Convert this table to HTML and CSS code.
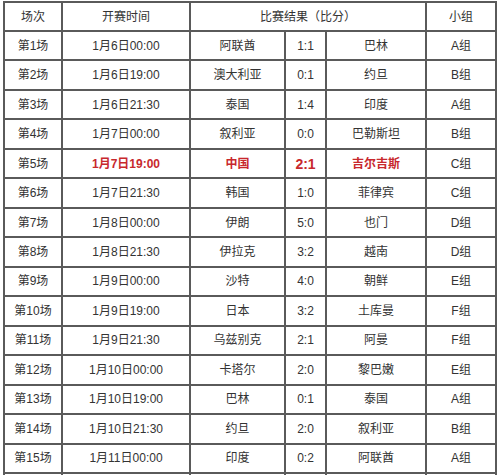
FILE: index.html
```html
<!DOCTYPE html>
<html lang="zh-CN">
<head>
<meta charset="utf-8">
<title>赛程</title>
<link rel="stylesheet" href="styles.css">
</head>
<body>
<table class="schedule">
  <colgroup>
    <col class="c-no">
    <col class="c-time">
    <col class="c-home">
    <col class="c-score">
    <col class="c-away">
    <col class="c-group">
  </colgroup>
  <thead>
    <tr class="head">
      <th>场次</th>
      <th>开赛时间</th>
      <th colspan="3">比赛结果（比分）</th>
      <th>小组</th>
    </tr>
  </thead>
  <tbody>
    <tr><td>第1场</td><td>1月6日00:00</td><td>阿联酋</td><td>1:1</td><td>巴林</td><td>A组</td></tr>
    <tr><td>第2场</td><td>1月6日19:00</td><td>澳大利亚</td><td>0:1</td><td>约旦</td><td>B组</td></tr>
    <tr><td>第3场</td><td>1月6日21:30</td><td>泰国</td><td>1:4</td><td>印度</td><td>A组</td></tr>
    <tr><td>第4场</td><td>1月7日00:00</td><td>叙利亚</td><td>0:0</td><td>巴勒斯坦</td><td>B组</td></tr>
    <tr class="hl"><td>第5场</td><td class="red">1月7日19:00</td><td class="red">中国</td><td class="red big">2:1</td><td class="red">吉尔吉斯</td><td>C组</td></tr>
    <tr><td>第6场</td><td>1月7日21:30</td><td>韩国</td><td>1:0</td><td>菲律宾</td><td>C组</td></tr>
    <tr><td>第7场</td><td>1月8日00:00</td><td>伊朗</td><td>5:0</td><td>也门</td><td>D组</td></tr>
    <tr><td>第8场</td><td>1月8日21:30</td><td>伊拉克</td><td>3:2</td><td>越南</td><td>D组</td></tr>
    <tr><td>第9场</td><td>1月9日00:00</td><td>沙特</td><td>4:0</td><td>朝鲜</td><td>E组</td></tr>
    <tr><td>第10场</td><td>1月9日19:00</td><td>日本</td><td>3:2</td><td>土库曼</td><td>F组</td></tr>
    <tr><td>第11场</td><td>1月9日21:30</td><td>乌兹别克</td><td>2:1</td><td>阿曼</td><td>F组</td></tr>
    <tr><td>第12场</td><td>1月10日00:00</td><td>卡塔尔</td><td>2:0</td><td>黎巴嫩</td><td>E组</td></tr>
    <tr><td>第13场</td><td>1月10日19:00</td><td>巴林</td><td>0:1</td><td>泰国</td><td>A组</td></tr>
    <tr><td>第14场</td><td>1月10日21:30</td><td>约旦</td><td>2:0</td><td>叙利亚</td><td>B组</td></tr>
    <tr><td>第15场</td><td>1月11日00:00</td><td>印度</td><td>0:2</td><td>阿联酋</td><td>A组</td></tr>
    <tr class="blank"><td></td><td></td><td></td><td></td><td></td><td></td></tr>
  </tbody>
</table>
</body>
</html>
```

FILE: styles.css
```css
html, body {
  margin: 0;
  padding: 0;
  background: #ffffff;
}

body {
  padding: 1px 0 0 3px;
  font-family: "Liberation Sans", "Noto Sans CJK SC", sans-serif;
  font-size: 12px;
  color: #333333;
}

.schedule {
  border-collapse: separate;
  border-spacing: 0;
  table-layout: fixed;
  width: 494px;
  border-top: 2px solid #5a5a5a;
  border-left: 2px solid #5a5a5a;
}

.c-no { width: 58px; }
.c-time { width: 128px; }
.c-home { width: 95px; }
.c-score { width: 41px; }
.c-away { width: 100px; }
.c-group { width: 70px; }

.schedule th,
.schedule td {
  box-sizing: border-box;
  border-right: 2px solid #5a5a5a;
  border-bottom: 2px solid #5a5a5a;
  padding: 0;
  text-align: center;
  vertical-align: middle;
  font-weight: normal;
  white-space: nowrap;
  overflow: hidden;
  line-height: 14px;
}

.schedule th {
  height: 29px;
}

.schedule td {
  height: 29.47px;
}

.schedule .red {
  color: #c8282d;
  font-weight: bold;
}

.schedule .big {
  font-size: 14px;
}
```
